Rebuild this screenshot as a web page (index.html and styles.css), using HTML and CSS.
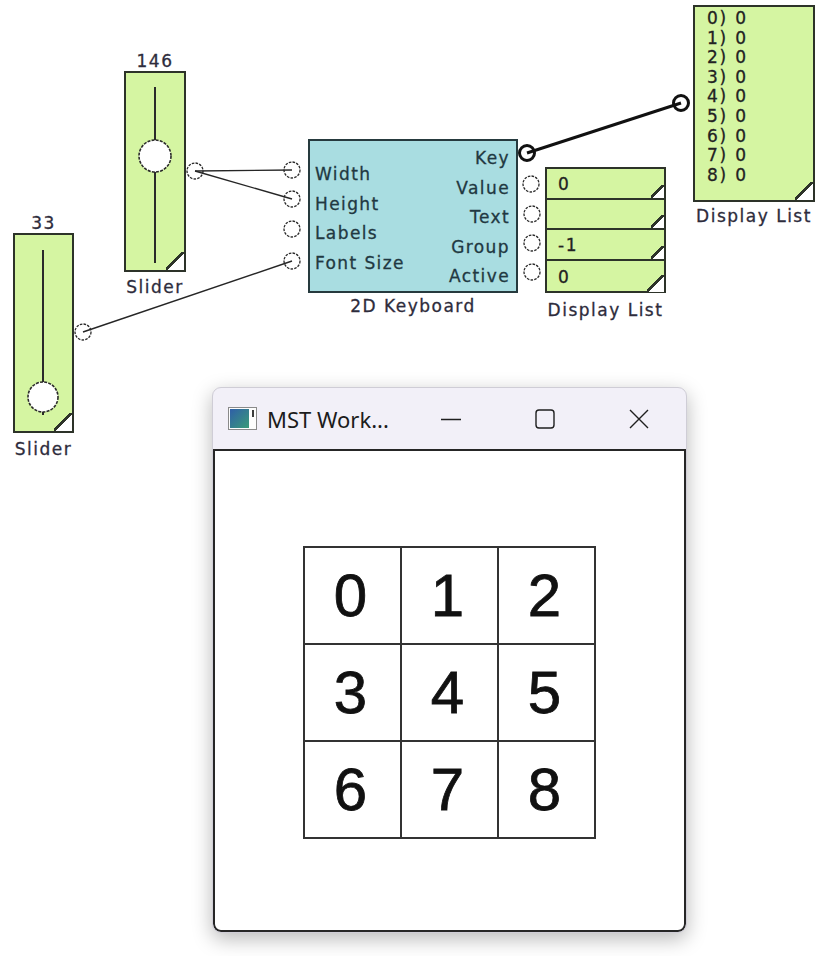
FILE: index.html
```html
<!DOCTYPE html>
<html lang="en">

<head>
    <meta charset="UTF-8">
    <meta name="viewport" content="width=device-width, initial-scale=1.0">
    <title>2D Keyboard</title>
    <link rel="stylesheet" href="styles.css">
</head>

<body>
    <div class="canvas">

        <!-- Slider 146 -->
        <div class="node slider-top">
            <div class="node-value">146</div>
            <div class="box green slider-box">
                <svg class="slider-svg" width="58" height="197">
                    <line class="track" x1="29" y1="14" x2="29" y2="190" />
                    <circle class="knob" cx="29" cy="83" r="16" />
                </svg>
            </div>
            <div class="node-name">Slider</div>
        </div>

        <!-- Slider 33 -->
        <div class="node slider-low">
            <div class="node-value">33</div>
            <div class="box green slider-box">
                <svg class="slider-svg" width="57" height="196">
                    <line class="track" x1="28" y1="15" x2="28" y2="180" />
                    <circle class="knob" cx="28" cy="162" r="15" />
                </svg>
            </div>
            <div class="node-name">Slider</div>
        </div>

        <!-- 2D Keyboard -->
        <div class="node keyboard">
            <div class="box keyboard-box">
                <ul class="pins pins-in">
                    <li>Width</li>
                    <li>Height</li>
                    <li>Labels</li>
                    <li>Font Size</li>
                </ul>
                <ul class="pins pins-out">
                    <li>Key</li>
                    <li>Value</li>
                    <li>Text</li>
                    <li>Group</li>
                    <li>Active</li>
                </ul>
            </div>
            <div class="node-name">2D Keyboard</div>
        </div>

        <!-- Display List (stacked values) -->
        <div class="node list-stack">
            <div class="box green stack-box">
                <div class="stack-row">0</div>
                <div class="stack-row"></div>
                <div class="stack-row">-1</div>
                <div class="stack-row">0</div>
            </div>
            <div class="node-name">Display List</div>
        </div>

        <!-- Display List (array) -->
        <div class="node list-array">
            <ul class="box green array-box">
                <li>0) 0</li>
                <li>1) 0</li>
                <li>2) 0</li>
                <li>3) 0</li>
                <li>4) 0</li>
                <li>5) 0</li>
                <li>6) 0</li>
                <li>7) 0</li>
                <li>8) 0</li>
            </ul>
            <div class="node-name">Display List</div>
        </div>

        <!-- wires + ports drawn over the nodes -->
        <svg class="wires" width="822" height="956">
            <circle class="port" cx="195" cy="171" r="8" />
            <circle class="port" cx="83" cy="332" r="8" />
            <circle class="port" cx="292" cy="170" r="8" />
            <circle class="port" cx="292" cy="199" r="8" />
            <circle class="port" cx="292" cy="229" r="8" />
            <circle class="port" cx="292" cy="261" r="8" />
            <circle class="port" cx="531" cy="184" r="8" />
            <circle class="port" cx="532" cy="214" r="8" />
            <circle class="port" cx="532" cy="243" r="8" />
            <circle class="port" cx="532" cy="272" r="8" />

            <line class="wire" x1="195" y1="171" x2="292" y2="170" />
            <line class="wire" x1="195" y1="171" x2="292" y2="199" />
            <line class="wire" x1="83" y1="332" x2="292" y2="261" />

            <circle class="port port-bold" cx="527" cy="153" r="7.5" />
            <circle class="port port-bold" cx="681" cy="103" r="7.5" />
            <line class="wire wire-bold" x1="527" y1="153" x2="681" y2="103" />
        </svg>

        <!-- output window -->
        <div class="window">
            <div class="titlebar">
                <div class="title">
                    <svg class="app-icon" width="29" height="23" viewBox="0 0 29 23">
                        <defs>
                            <linearGradient id="ico" x1="0" y1="0" x2="1" y2="1">
                                <stop offset="0" stop-color="#2f5fa8" />
                                <stop offset="1" stop-color="#3a9b78" />
                            </linearGradient>
                        </defs>
                        <rect x="0.5" y="0.5" width="28" height="22" fill="#fdfdfd" stroke="#8a8a8a" />
                        <rect x="2" y="2" width="19" height="19" fill="url(#ico)" />
                        <rect x="24" y="3" width="2" height="7" fill="#3c3c3c" />
                    </svg>
                    <span class="title-text">MST Work...</span>
                </div>
                <div class="caption-btn">
                    <svg width="20" height="20" viewBox="0 0 20 20">
                        <line x1="0" y1="10.5" x2="20" y2="10.5" />
                    </svg>
                </div>
                <div class="caption-btn">
                    <svg width="20" height="20" viewBox="0 0 20 20">
                        <rect x="1" y="1" width="18" height="18" rx="3" />
                    </svg>
                </div>
                <div class="caption-btn">
                    <svg width="20" height="20" viewBox="0 0 20 20">
                        <path d="M1 1 L19 19 M19 1 L1 19" />
                    </svg>
                </div>
            </div>
            <div class="window-body">
                <div class="keypad">
                    <div class="key">0</div>
                    <div class="key">1</div>
                    <div class="key">2</div>
                    <div class="key">3</div>
                    <div class="key">4</div>
                    <div class="key">5</div>
                    <div class="key">6</div>
                    <div class="key">7</div>
                    <div class="key">8</div>
                </div>
            </div>
        </div>

    </div>
</body>

</html>
```

FILE: styles.css
```css
body {
    margin: 0;
    background-color: #fff;
    font-family: "DejaVu Sans", Verdana, sans-serif;
}

ul {
    margin: 0;
    padding: 0;
    list-style: none;
}

.canvas {
    position: relative;
    width: 822px;
    height: 956px;
    overflow: hidden;
}

/* nodes sit on a free canvas */
.node {
    position: absolute;
    display: flex;
    flex-direction: column;
    align-items: center;
}

.node-value,
.node-name {
    font-size: 17px;
    line-height: 20px;
    letter-spacing: 1.5px;
    color: #2e2c3c;
    white-space: nowrap;
    -webkit-text-stroke: 0.3px #2e2c3c;
}

.node-name {
    margin-top: 5px;
}

.box {
    position: relative;
    box-sizing: border-box;
    border: 2px solid #2d3329;
}

.green {
    background-color: #d5f5a2;
}

/* the little folded corner */
.box.green:after,
.stack-row:after {
    position: absolute;
    right: 0;
    bottom: 0;
    width: 18px;
    height: 18px;
    content: "";
    background: linear-gradient(to top left, #fff 46%, #2d3329 46%, #2d3329 58%, transparent 58%);
}

.slider-top {
    left: 124px;
    top: 51px;
    width: 62px;
}

.slider-low {
    left: 13px;
    top: 213px;
    width: 61px;
}

.slider-top .slider-box {
    width: 62px;
    height: 201px;
}

.slider-low .slider-box {
    width: 61px;
    height: 200px;
}

.slider-low .node-name {
    margin-top: 6px;
}

.slider-svg {
    display: block;
}

.track {
    stroke: #2a2a2a;
    stroke-width: 2;
}

.knob {
    fill: #fff;
    stroke: #2a2a2a;
    stroke-width: 1.6;
    stroke-dasharray: 3 1.2;
}

/* 2D Keyboard block */
.keyboard {
    left: 308px;
    top: 139px;
    width: 210px;
}

.keyboard-box {
    display: flex;
    justify-content: space-between;
    width: 210px;
    height: 154px;
    background-color: #a9dde1;
    border-color: #263a3e;
}

.pins li {
    font-size: 17px;
    line-height: 29.5px;
    letter-spacing: 1.4px;
    color: #213841;
    white-space: nowrap;
    -webkit-text-stroke: 0.3px #213841;
}

.pins-in {
    padding: 19px 0 0 5px;
}

.pins-out {
    padding: 3px 6px 0 0;
    text-align: right;
}

.keyboard .node-name {
    margin-top: 3px;
}

/* stacked display list */
.list-stack {
    left: 545px;
    top: 167px;
    width: 121px;
}

.stack-box {
    width: 121px;
    height: 126px;
}

.box.stack-box:after {
    display: none;
}

.stack-row {
    position: relative;
    box-sizing: border-box;
    height: 30.5px;
    padding-left: 11px;
    font-size: 17px;
    line-height: 30px;
    letter-spacing: 1.5px;
    color: #222;
    border-bottom: 2px solid #2d3329;
    -webkit-text-stroke: 0.3px #222;
}

.stack-row:after {
    width: 13px;
    height: 13px;
}

.stack-row:last-child {
    height: 31px;
    line-height: 32px;
    border-bottom: none;
}

.stack-row:last-child:after {
    width: 17px;
    height: 17px;
}

.list-stack .node-name {
    margin-top: 7px;
}

/* array display list */
.list-array {
    left: 693px;
    top: 5px;
    width: 122px;
}

.array-box {
    width: 122px;
    height: 197px;
    padding: 2px 0 0 12px;
}

.array-box li {
    font-size: 17px;
    line-height: 19.6px;
    letter-spacing: 1.8px;
    color: #222;
    white-space: pre;
    -webkit-text-stroke: 0.3px #222;
}

.list-array .node-name {
    margin-top: 4px;
}

/* wires */
.wires {
    position: absolute;
    top: 0;
    left: 0;
    z-index: 2;
    pointer-events: none;
}

.port {
    fill: #fff;
    stroke: #2a2a2a;
    stroke-width: 1.3;
    stroke-dasharray: 2.6 1.2;
}

.port-bold {
    stroke: #111;
    stroke-width: 3;
    stroke-dasharray: none;
}

.wire {
    stroke: #262626;
    stroke-width: 1.4;
}

.wire-bold {
    stroke: #111;
    stroke-width: 3;
}

/* output window */
.window {
    position: absolute;
    left: 212px;
    top: 387px;
    display: flex;
    flex-direction: column;
    box-sizing: border-box;
    width: 475px;
    height: 546px;
    overflow: hidden;
    background-color: #f2f0f8;
    border: 1px solid #cfcdd6;
    border-radius: 9px;
    box-shadow: 0 6px 20px rgba(0, 0, 0, 0.28);
}

.titlebar {
    display: flex;
    align-items: center;
    height: 61px;
}

.title {
    display: flex;
    flex: 1;
    align-items: center;
    gap: 10px;
    padding-left: 15px;
}

.title-text {
    font-family: "Noto Sans", sans-serif;
    font-size: 22px;
    color: #1c1c1c;
}

.caption-btn {
    display: flex;
    align-items: center;
    justify-content: center;
    width: 94px;
    height: 61px;
}

.caption-btn svg {
    fill: none;
    stroke: #1f1f1f;
    stroke-width: 1.4;
}

.window-body {
    display: flex;
    flex: 1;
    justify-content: center;
    padding-top: 95px;
    background-color: #fff;
    border: 2px solid #262626;
    border-radius: 0 0 8px 8px;
}

.keypad {
    display: grid;
    grid-template-columns: repeat(3, 95px);
    grid-template-rows: repeat(3, 95px);
    gap: 2px;
    align-self: flex-start;
    padding: 2px;
    background-color: #333;
}

.key {
    display: flex;
    align-items: center;
    justify-content: center;
    padding-right: 4px;
    font-family: "Liberation Sans", Arial, sans-serif;
    font-size: 60px;
    color: #111;
    background-color: #fff;
    -webkit-text-stroke: 0.8px #111;
}
```
